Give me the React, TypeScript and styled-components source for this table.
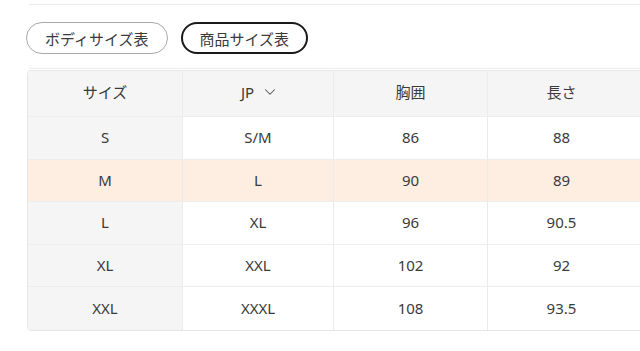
import React from "react";
import styled, { createGlobalStyle } from "styled-components";
import { ChevronDown } from "lucide-react";

const GlobalStyle = createGlobalStyle`
  html, body {
    margin: 0;
    padding: 0;
    background: #ffffff;
    overflow: hidden;
  }
  body {
    font-family: "Noto Sans", "Noto Sans CJK JP", sans-serif;
    color: #3a3a3a;
  }
`;

const Page = styled.div`
  width: 640px;
  height: 351px;
  overflow: hidden;
  padding: 4px 0 0 26px;
  box-sizing: border-box;
`;

const Divider = styled.div`
  height: 0;
  border-top: 1px solid #ececec;
  margin-left: 3px;
`;

const TabRow = styled.div`
  display: flex;
  gap: 13px;
  padding: 17px 0 14px;
`;

const Tab = styled.button<{ $active?: boolean }>`
  height: 32px;
  box-sizing: border-box;
  padding: 0 ${(p) => (p.$active ? "17px" : "18px")};
  border-radius: 16px;
  border: ${(p) => (p.$active ? "2px solid #1a1a1a" : "1px solid #a8a8a8")};
  background: #ffffff;
  font-family: "Noto Sans CJK JP", sans-serif;
  font-size: 15px;
  color: #3a3a3a;
  display: flex;
  align-items: center;
`;

const Table = styled.div`
  margin-top: 1px;
  margin-left: 1px;
  width: 620px;
  display: grid;
  grid-template-columns: 155px 151px 154px 160px;
  border: 1px solid #e6e6e6;
  border-radius: 4px;
  overflow: hidden;
`;

const Cell = styled.div<{ $bg: string; $head?: boolean; $last?: boolean }>`
  height: ${(p) => (p.$head ? "46px" : "42.6px")};
  box-sizing: border-box;
  display: flex;
  align-items: center;
  justify-content: center;
  gap: 11px;
  padding-bottom: ${(p) => (p.$head ? "4px" : "1px")};
  background: ${(p) => p.$bg};
  border-right: 1px solid #ebebeb;
  border-bottom: ${(p) => (p.$last ? "none" : "1px solid #ededed")};
  font-size: 15px;
  color: #3a3a3a;
  font-family: "Noto Sans", "Noto Sans CJK JP", sans-serif;

  &:nth-child(4n) {
    padding-right: 12px;
  }
`;

const headers = ["サイズ", "JP", "胸囲", "長さ"];
const rows = [
  ["S", "S/M", "86", "88"],
  ["M", "L", "90", "89"],
  ["L", "XL", "96", "90.5"],
  ["XL", "XXL", "102", "92"],
  ["XXL", "XXXL", "108", "93.5"],
];

const HEAD_BG = "#f5f5f5";
const HIGHLIGHT_BG = "#fdeee1";

export default function App() {
  return (
    <Page>
      <GlobalStyle />
      <Divider />
      <TabRow>
        <Tab>ボディサイズ表</Tab>
        <Tab $active>商品サイズ表</Tab>
      </TabRow>
      <Divider />
      <Table>
        {headers.map((h) => (
          <Cell key={h} $bg={HEAD_BG} $head>
            {h}
            {h === "JP" && <ChevronDown size={18} strokeWidth={1.4} color="#555" style={{ margin: "0 -4px" }} />}
          </Cell>
        ))}
        {rows.map((r, ri) =>
          r.map((v, ci) => (
            <Cell
              key={`${ri}-${ci}`}
              $bg={ri === 1 ? HIGHLIGHT_BG : ci === 0 ? HEAD_BG : "#ffffff"}
              $last={ri === rows.length - 1}
            >
              {v}
            </Cell>
          ))
        )}
      </Table>
    </Page>
  );
}
